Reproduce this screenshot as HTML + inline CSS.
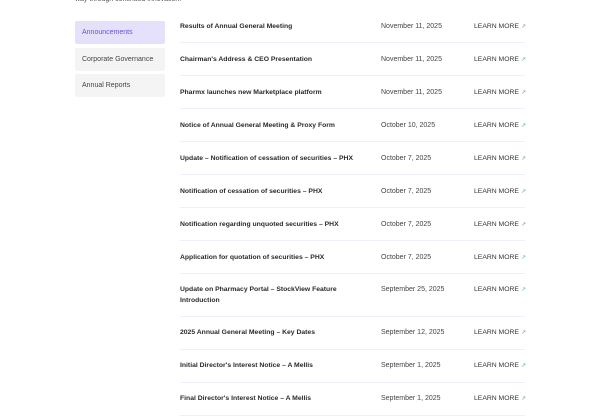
<!DOCTYPE html>
<html><head><meta charset="utf-8"><style>
*{margin:0;padding:0;box-sizing:border-box}
body{width:600px;height:400px;overflow:hidden;background:#fff;font-family:"Liberation Sans",sans-serif;position:relative;color:#222}
.top{position:absolute;left:75px;top:-5px;font-size:7px;color:#555;line-height:10px}
.side{position:absolute;left:75px;width:90px;height:23px;border-radius:2px;background:#f4f4f4;font-size:7px;color:#444;padding-left:7px;line-height:23px}
.side.a{background:#e6e1fb;color:#6c4fd9}
.row{position:absolute;left:180px;width:345px;border-bottom:1px solid #efeefa;font-size:7px;line-height:11px}
.t{position:absolute;left:0;color:#2a2a2a;font-weight:bold;width:190px;font-size:6.8px}
.d{position:absolute;left:201px;color:#444;white-space:nowrap}
.l{position:absolute;left:294px;color:#333;white-space:nowrap;font-size:6.8px}
.l span{color:#6a9;font-size:6px;margin-left:2px}
</style></head><body>
<div class="top">way through continued innovation.</div>
<div class="side a" style="top:21px">Announcements</div>
<div class="side" style="top:48px">Corporate Governance</div>
<div class="side" style="top:74px">Annual Reports</div>

<div class="row" style="top:10px;height:33px"><div class="t" style="top:11px">Results of Annual General Meeting</div><div class="d" style="top:11px">November 11, 2025</div><div class="l" style="top:11px">LEARN MORE<span>↗</span></div></div>
<div class="row" style="top:43px;height:33px"><div class="t" style="top:11px">Chairman's Address &amp; CEO Presentation</div><div class="d" style="top:11px">November 11, 2025</div><div class="l" style="top:11px">LEARN MORE<span>↗</span></div></div>
<div class="row" style="top:76px;height:33px"><div class="t" style="top:11px">Pharmx launches new Marketplace platform</div><div class="d" style="top:11px">November 11, 2025</div><div class="l" style="top:11px">LEARN MORE<span>↗</span></div></div>
<div class="row" style="top:109px;height:33px"><div class="t" style="top:11px">Notice of Annual General Meeting &amp; Proxy Form</div><div class="d" style="top:11px">October 10, 2025</div><div class="l" style="top:11px">LEARN MORE<span>↗</span></div></div>
<div class="row" style="top:142px;height:33px"><div class="t" style="top:11px">Update – Notification of cessation of securities – PHX</div><div class="d" style="top:11px">October 7, 2025</div><div class="l" style="top:11px">LEARN MORE<span>↗</span></div></div>
<div class="row" style="top:175px;height:33px"><div class="t" style="top:11px">Notification of cessation of securities – PHX</div><div class="d" style="top:11px">October 7, 2025</div><div class="l" style="top:11px">LEARN MORE<span>↗</span></div></div>
<div class="row" style="top:208px;height:33px"><div class="t" style="top:11px">Notification regarding unquoted securities – PHX</div><div class="d" style="top:11px">October 7, 2025</div><div class="l" style="top:11px">LEARN MORE<span>↗</span></div></div>
<div class="row" style="top:241px;height:33px"><div class="t" style="top:11px">Application for quotation of securities – PHX</div><div class="d" style="top:11px">October 7, 2025</div><div class="l" style="top:11px">LEARN MORE<span>↗</span></div></div>
<div class="row" style="top:274px;height:43px"><div class="t" style="top:10px;width:170px">Update on Pharmacy Portal – StockView Feature Introduction</div><div class="d" style="top:10px">September 25, 2025</div><div class="l" style="top:10px">LEARN MORE<span>↗</span></div></div>
<div class="row" style="top:317px;height:33px"><div class="t" style="top:10px">2025 Annual General Meeting – Key Dates</div><div class="d" style="top:10px">September 12, 2025</div><div class="l" style="top:10px">LEARN MORE<span>↗</span></div></div>
<div class="row" style="top:350px;height:33px"><div class="t" style="top:10px">Initial Director's Interest Notice – A Mellis</div><div class="d" style="top:10px">September 1, 2025</div><div class="l" style="top:10px">LEARN MORE<span>↗</span></div></div>
<div class="row" style="top:383px;height:33px"><div class="t" style="top:10px">Final Director's Interest Notice – A Mellis</div><div class="d" style="top:10px">September 1, 2025</div><div class="l" style="top:10px">LEARN MORE<span>↗</span></div></div>
</body></html>
